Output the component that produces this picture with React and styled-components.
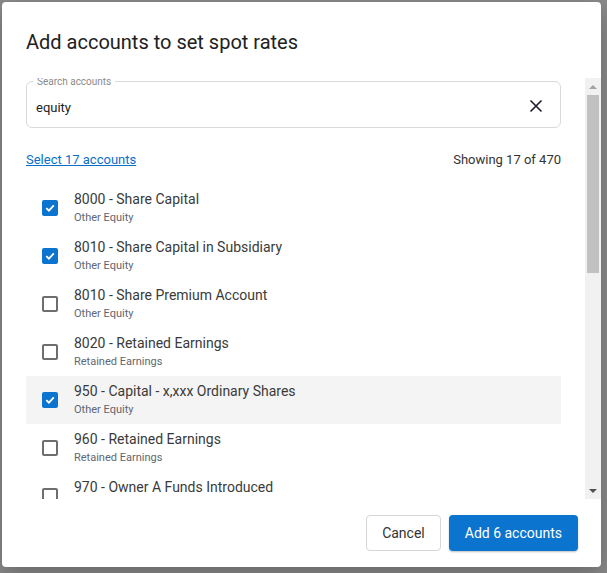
import React from 'react'
import styled, { createGlobalStyle } from 'styled-components'

const GlobalStyle = createGlobalStyle`
  html, body {
    margin: 0;
    padding: 0;
    height: 100%;
  }
  body {
    font-family: Roboto, "Liberation Sans", Arial, sans-serif;
    background-color: #8a8a8a;
  }
`

const Backdrop = styled.div`
  width: 100vw;
  height: 100vh;
  box-sizing: border-box;
  padding: 2px 6px 6px 2px;
  display: flex;
`

const Dialog = styled.div`
  flex: 1;
  background-color: #fff;
  border-radius: 4px;
  display: flex;
  flex-direction: column;
  overflow: hidden;
  box-shadow: 0 8px 24px rgba(0, 0, 0, 0.25);
`

const Title = styled.h2`
  margin: 0;
  padding: 26px 24px 22px;
  font-size: 20px;
  line-height: 28px;
  font-weight: 400;
  color: #212121;
`

const ScrollRegion = styled.div`
  flex: 1;
  min-height: 0;
  display: flex;
`

const ScrollBody = styled.div`
  flex: 1;
  overflow: hidden;
  padding: 3px 24px 0 24px;
`

const ScrollBar = styled.div`
  width: 16px;
  display: flex;
  flex-direction: column;
  background-color: #f1f1f1;
`

const ArrowButton = styled.div`
  height: 17px;
  display: flex;
  align-items: center;
  justify-content: center;
`

const Track = styled.div`
  flex: 1;
  padding: 0 2px;
`

const Thumb = styled.div`
  height: 178px;
  background-color: #c1c1c1;
`

const SearchBox = styled.div`
  position: relative;
  height: 47px;
  box-sizing: border-box;
  border: 1px solid #d9d9d9;
  border-radius: 6px;
  display: flex;
  align-items: center;
  padding: 0 16px 0 9px;
`

const SearchLabel = styled.span`
  position: absolute;
  top: -5px;
  left: 6px;
  padding: 0 4px;
  background-color: #fff;
  font-size: 10px;
  line-height: 10px;
  color: #8a8a8a;
`

const SearchInput = styled.input`
  flex: 1;
  border: none;
  outline: none;
  padding: 0;
  margin-top: 5px;
  font-family: inherit;
  font-size: 13px;
  color: #222;
  background: transparent;
`

const ClearButton = styled.button`
  border: none;
  background: none;
  padding: 0;
  margin-top: 2px;
  width: 16px;
  height: 16px;
  display: flex;
  align-items: center;
  justify-content: center;
  cursor: pointer;
`

const Toolbar = styled.div`
  display: flex;
  justify-content: space-between;
  align-items: center;
  margin-top: 21px;
  height: 20px;
  font-size: 13px;
`

const SelectLink = styled.a`
  color: #0b6fc8;
  text-decoration: underline;
  cursor: pointer;
`

const Count = styled.span`
  color: #333;
`

const List = styled.ul`
  list-style: none;
  margin: 15px 0 0;
  padding: 0;
`

const Row = styled.li`
  height: 48px;
  box-sizing: border-box;
  display: flex;
  align-items: center;
  gap: 16px;
  padding-left: 16px;
  background-color: ${props => (props.$highlighted ? '#f4f4f4' : 'transparent')};
`

const Box = styled.span`
  width: 16px;
  height: 16px;
  box-sizing: border-box;
  border-radius: 2px;
  flex-shrink: 0;
  display: flex;
  align-items: center;
  justify-content: center;
  background-color: ${props => (props.$checked ? '#0b74ce' : '#fff')};
  border: ${props => (props.$checked ? 'none' : '2px solid #6e6e6e')};
`

const Texts = styled.div`
  align-self: flex-start;
  padding-top: 6px;
  display: flex;
  flex-direction: column;
`

const Primary = styled.span`
  font-size: 14px;
  line-height: 18px;
  color: #3a3a3a;
`

const Secondary = styled.span`
  margin-top: 1px;
  font-size: 11px;
  line-height: 18px;
  color: #5f6670;
`

const Footer = styled.div`
  display: flex;
  justify-content: flex-end;
  gap: 8px;
  padding: 16px 23px 16px 24px;
`

const Button = styled.button`
  height: 36px;
  padding: 0 ${props => (props.$primary ? '16px' : '15px')};
  border-radius: 4px;
  font-family: inherit;
  font-size: 14px;
  cursor: pointer;
  border: ${props => (props.$primary ? 'none' : '1px solid #d6d6d6')};
  background-color: ${props => (props.$primary ? '#0b74ce' : '#fff')};
  color: ${props => (props.$primary ? '#fff' : '#333')};
  box-shadow: ${props => (props.$primary ? '0 1px 2px rgba(0,0,0,0.25)' : 'none')};
`

const accounts = [
  { name: '8000 - Share Capital', type: 'Other Equity', checked: true },
  { name: '8010 - Share Capital in Subsidiary', type: 'Other Equity', checked: true },
  { name: '8010 - Share Premium Account', type: 'Other Equity' },
  { name: '8020 - Retained Earnings', type: 'Retained Earnings' },
  { name: '950 - Capital - x,xxx Ordinary Shares', type: 'Other Equity', checked: true, hover: true },
  { name: '960 - Retained Earnings', type: 'Retained Earnings' },
  { name: '970 - Owner A Funds Introduced', type: 'Other Equity' },
  { name: '980 - Owner A Drawings', type: 'Other Equity', checked: true },
  { name: '990 - Owner B Funds Introduced', type: 'Other Equity' },
  { name: '995 - Owner B Drawings', type: 'Other Equity' },
  { name: '3000 - Opening Balance Equity', type: 'Other Equity', checked: true },
  { name: '3100 - Current Year Earnings', type: 'Retained Earnings' },
  { name: '3200 - Dividends Paid', type: 'Other Equity' },
  { name: '3300 - Revaluation Reserve', type: 'Other Equity', checked: true },
  { name: '3400 - Foreign Currency Reserve', type: 'Other Equity' },
  { name: '3500 - Minority Interest', type: 'Other Equity' },
  { name: '3600 - Treasury Shares', type: 'Other Equity' },
]

const Check = () => (
  <svg width="12" height="12" viewBox="0 0 12 12">
    <path d="M2.3 6.2 L4.9 8.7 L9.8 3.4" fill="none" stroke="#fff" strokeWidth="1.8" />
  </svg>
)

const CloseIcon = () => (
  <svg width="14" height="14" viewBox="0 0 14 14">
    <path d="M1.5 1.5 L12.5 12.5 M12.5 1.5 L1.5 12.5" stroke="#1c1c2e" strokeWidth="1.6" />
  </svg>
)

const Arrow = ({ down, color }) => (
  <svg width="8" height="4" viewBox="0 0 8 4">
    <path d={down ? 'M0 0 L8 0 L4 4 Z' : 'M0 4 L8 4 L4 0 Z'} fill={color} />
  </svg>
)

const App = () => {
  return (
    <Backdrop>
      <GlobalStyle />
      <Dialog>
        <Title>Add accounts to set spot rates</Title>
        <ScrollRegion>
          <ScrollBody>
            <SearchBox>
              <SearchLabel>Search accounts</SearchLabel>
              <SearchInput defaultValue="equity" />
              <ClearButton aria-label="Clear search">
                <CloseIcon />
              </ClearButton>
            </SearchBox>
            <Toolbar>
              <SelectLink>Select 17 accounts</SelectLink>
              <Count>Showing 17 of 470</Count>
            </Toolbar>
            <List>
              {accounts.map((a, i) => (
                <Row key={i} $highlighted={a.hover}>
                  <Box $checked={a.checked}>{a.checked && <Check />}</Box>
                  <Texts>
                    <Primary>{a.name}</Primary>
                    <Secondary>{a.type}</Secondary>
                  </Texts>
                </Row>
              ))}
            </List>
          </ScrollBody>
          <ScrollBar>
            <ArrowButton><Arrow color="#a3a3a3" /></ArrowButton>
            <Track><Thumb /></Track>
            <ArrowButton><Arrow down color="#505050" /></ArrowButton>
          </ScrollBar>
        </ScrollRegion>
        <Footer>
          <Button>Cancel</Button>
          <Button $primary>Add 6 accounts</Button>
        </Footer>
      </Dialog>
    </Backdrop>
  )
}

export default App
